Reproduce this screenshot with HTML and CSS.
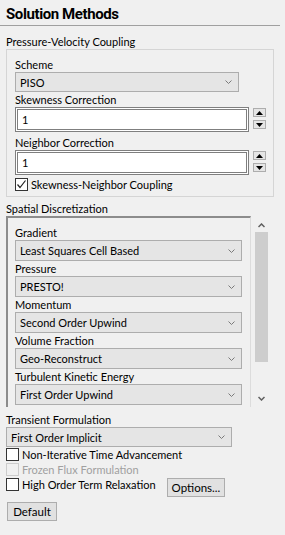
FILE: index.html
```html
<!DOCTYPE html>
<html lang="en">
<head>
    <meta charset="UTF-8">
    <title>Solution Methods</title>
    <link rel="stylesheet" href="styles.css">
</head>
<body>
<div class="panel">
    <h1 class="title">Solution Methods</h1>

    <!-- Pressure-Velocity Coupling -->
    <div class="caption">Pressure-Velocity Coupling</div>
    <div class="group">
        <div class="field-label">Scheme</div>
        <div class="combo combo-scheme"><span>PISO</span><svg class="chev" width="7" height="4" viewBox="0 0 7 4"><polyline points="0.5,0.5 3.5,3.5 6.5,0.5" fill="none" stroke="#7a7a7a" stroke-width="1"/></svg></div>

        <div class="field-label">Skewness Correction</div>
        <div class="spin-row">
            <div class="num-box">1</div>
            <div class="spin">
                <div class="spin-btn"><svg width="7" height="4" viewBox="0 0 7 4"><polygon points="3.5,0 7,4 0,4" fill="#000"/></svg></div>
                <div class="spin-btn"><svg width="7" height="4" viewBox="0 0 7 4"><polygon points="0,0 7,0 3.5,4" fill="#000"/></svg></div>
            </div>
        </div>

        <div class="field-label gap">Neighbor Correction</div>
        <div class="spin-row">
            <div class="num-box">1</div>
            <div class="spin">
                <div class="spin-btn"><svg width="7" height="4" viewBox="0 0 7 4"><polygon points="3.5,0 7,4 0,4" fill="#000"/></svg></div>
                <div class="spin-btn"><svg width="7" height="4" viewBox="0 0 7 4"><polygon points="0,0 7,0 3.5,4" fill="#000"/></svg></div>
            </div>
        </div>

        <div class="check check-coupling">
            <span class="box"><svg width="11" height="11" viewBox="0 0 11 11"><polyline points="1.5,5.5 4,8.5 9.5,1.5" fill="none" stroke="#222" stroke-width="1.2"/></svg></span>
            Skewness-Neighbor Coupling
        </div>
    </div>

    <!-- Spatial Discretization -->
    <div class="caption caption-spatial">Spatial Discretization</div>
    <div class="scroll-wrap">
        <div class="scroll-box">
            <div class="field-label">Gradient</div>
            <div class="combo combo-wide"><span>Least Squares Cell Based</span><svg class="chev" width="7" height="4" viewBox="0 0 7 4"><polyline points="0.5,0.5 3.5,3.5 6.5,0.5" fill="none" stroke="#7a7a7a" stroke-width="1"/></svg></div>
            <div class="field-label">Pressure</div>
            <div class="combo combo-wide"><span>PRESTO!</span><svg class="chev" width="7" height="4" viewBox="0 0 7 4"><polyline points="0.5,0.5 3.5,3.5 6.5,0.5" fill="none" stroke="#7a7a7a" stroke-width="1"/></svg></div>
            <div class="field-label">Momentum</div>
            <div class="combo combo-wide"><span>Second Order Upwind</span><svg class="chev" width="7" height="4" viewBox="0 0 7 4"><polyline points="0.5,0.5 3.5,3.5 6.5,0.5" fill="none" stroke="#7a7a7a" stroke-width="1"/></svg></div>
            <div class="field-label">Volume Fraction</div>
            <div class="combo combo-wide"><span>Geo-Reconstruct</span><svg class="chev" width="7" height="4" viewBox="0 0 7 4"><polyline points="0.5,0.5 3.5,3.5 6.5,0.5" fill="none" stroke="#7a7a7a" stroke-width="1"/></svg></div>
            <div class="field-label">Turbulent Kinetic Energy</div>
            <div class="combo combo-wide"><span>First Order Upwind</span><svg class="chev" width="7" height="4" viewBox="0 0 7 4"><polyline points="0.5,0.5 3.5,3.5 6.5,0.5" fill="none" stroke="#7a7a7a" stroke-width="1"/></svg></div>
        </div>
        <div class="scrollbar">
            <div class="sb-arrow"><svg width="7" height="5" viewBox="0 0 7 5"><polyline points="0.5,4 3.5,1 6.5,4" fill="none" stroke="#606060" stroke-width="1.5"/></svg></div>
            <div class="sb-thumb"></div>
            <div class="sb-track"></div>
            <div class="sb-arrow"><svg width="7" height="5" viewBox="0 0 7 5"><polyline points="0.5,1 3.5,4 6.5,1" fill="none" stroke="#606060" stroke-width="1.5"/></svg></div>
        </div>
    </div>

    <!-- Transient Formulation -->
    <div class="caption caption-transient">Transient Formulation</div>
    <div class="combo combo-transient"><span>First Order Implicit</span><svg class="chev" width="7" height="4" viewBox="0 0 7 4"><polyline points="0.5,0.5 3.5,3.5 6.5,0.5" fill="none" stroke="#7a7a7a" stroke-width="1"/></svg></div>

    <div class="check check-row"><span class="box"></span>Non-Iterative Time Advancement</div>
    <div class="check check-row disabled"><span class="box"></span>Frozen Flux Formulation</div>
    <div class="check check-row">
        <span class="box"></span>High Order Term Relaxation
        <button class="btn btn-options">Options...</button>
    </div>

    <button class="btn btn-default">Default</button>
</div>
</body>
</html>
```

FILE: styles.css
```css
/* Panel */
body {
    margin: 0;
    background-color: #f0f0f0;
    font-family: Lato, sans-serif;
    font-size: 11px;
    color: #000;
}
.panel {
    width: 285px;
    height: 535px;
    overflow: hidden;
}
.title {
    margin: 0 5px 0 0;
    padding-left: 6px;
    height: 25px;
    line-height: 28px;
    font-family: Roboto, sans-serif;
    font-size: 15px;
    font-weight: bold;
    letter-spacing: -0.4px;
    border-bottom: 1px solid #a0a0a0;
}
.caption {
    margin: 8px 0 0 6px;
    line-height: 15px;
    white-space: nowrap;
}
.caption-spatial {
    margin-top: 4px;
}
.caption-transient {
    margin-top: 5px;
}
.field-label {
    line-height: 15px;
    white-space: nowrap;
}
.field-label.gap {
    margin-top: 3px;
}
/* Group box */
.group {
    margin-left: 6px;
    width: 268px;
    box-sizing: border-box;
    border: 1px solid #d5d5d5;
    padding: 7px 0 4px 8px;
}
/* Combo boxes */
.combo {
    display: flex;
    align-items: center;
    justify-content: space-between;
    box-sizing: border-box;
    height: 20px;
    padding: 0 6px 0 4px;
    background-color: #e5e5e5;
    border: 1px solid #adadad;
    white-space: nowrap;
}
.combo-scheme {
    width: 224px;
}
.combo-wide {
    width: 227px;
    height: 21px;
}
.combo-transient {
    margin-left: 6px;
    width: 226px;
}
/* Number inputs with spinners */
.spin-row {
    display: flex;
    align-items: flex-start;
}
.num-box {
    box-sizing: border-box;
    width: 234px;
    height: 25px;
    padding: 3px 0 0 4px;
    background-color: #fff;
    border: 3px double #7f7f7f;
    line-height: 14px;
}
.spin {
    display: flex;
    flex-direction: column;
    gap: 3px;
    margin: 1px 0 0 4px;
}
.spin-btn {
    display: flex;
    align-items: center;
    justify-content: center;
    box-sizing: border-box;
    width: 13px;
    height: 9px;
    background-color: #e5e5e5;
    border: 1px solid #adadad;
}
/* Checkboxes */
.check {
    display: flex;
    align-items: center;
    line-height: 15px;
    white-space: nowrap;
}
.check-coupling {
    margin-top: 2px;
}
.check-row {
    margin-left: 6px;
    align-items: flex-start;
}
.box {
    display: flex;
    align-items: center;
    justify-content: center;
    box-sizing: border-box;
    width: 13px;
    height: 13px;
    margin: 1px 3px 0 0;
    background-color: #fff;
    border: 1px solid #333;
}
.check-coupling .box {
    margin-top: 0;
}
.disabled {
    color: #a0a0a0;
}
.disabled .box {
    background-color: #f0f0f0;
    border-color: #cccccc;
}
/* Scrolling area */
.scroll-wrap {
    display: flex;
    margin-left: 6px;
    height: 191px;
}
.scroll-box {
    box-sizing: border-box;
    width: 245px;
    height: 191px;
    overflow: hidden;
    padding: 7px 0 0 7px;
    border-top: 2px solid #8c8c8c;
    border-left: 2px solid #8c8c8c;
    border-right: 1px solid #dcdcdc;
}
.scrollbar {
    display: flex;
    flex-direction: column;
    width: 16px;
    margin: 2px 0 2px 2px;
}
.sb-arrow {
    display: flex;
    align-items: center;
    justify-content: center;
    height: 14px;
}
.sb-thumb {
    height: 130px;
    margin: 0 1px 0 2px;
    background-color: #cdcdcd;
}
.sb-track {
    flex: 1;
}
/* Buttons */
.btn {
    box-sizing: border-box;
    height: 19px;
    padding: 0 4px;
    font-family: Lato, sans-serif;
    font-size: 11.5px;
    background-color: #e1e1e1;
    border: 1px solid #adadad;
    color: #000;
}
.btn-options {
    width: 58px;
    margin: 1px 0 0 11px;
}
.btn-default {
    width: 50px;
    margin: 5px 0 0 7px;
}
```
